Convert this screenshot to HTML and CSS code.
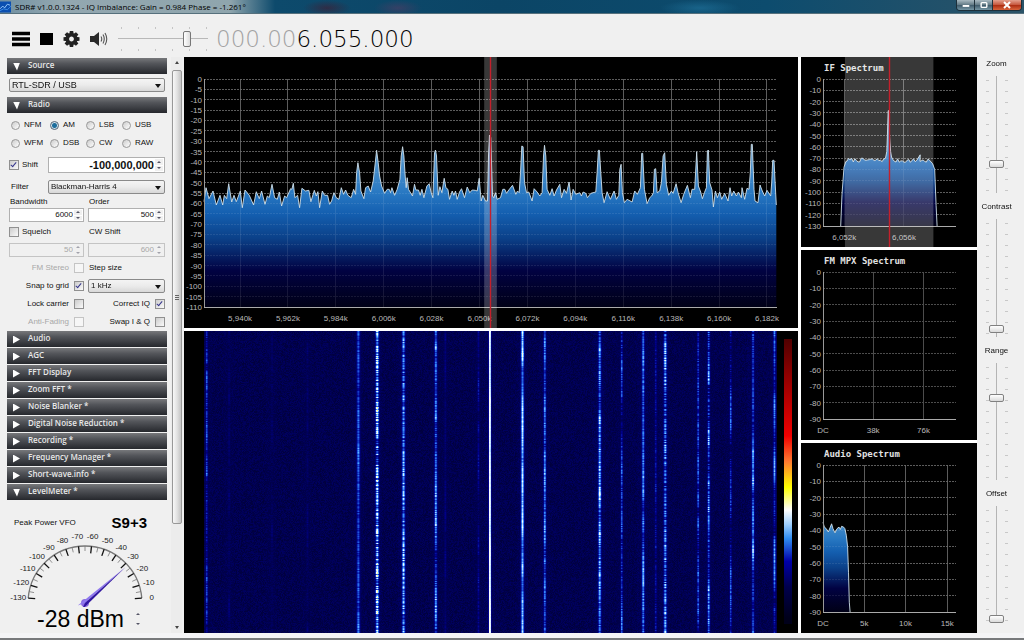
FILE: index.html
```html
<!DOCTYPE html>
<html lang="en">
<head>
<meta charset="utf-8">
<title>SDR# v1.0.0.1324</title>
<link rel="stylesheet" href="styles.css">
</head>
<body>
<header class="titlebar">
  <svg class="app-icon" viewBox="0 0 12 12" aria-hidden="true"><rect width="12" height="12" fill="#0b4fb0"/><path d="M0 8L3 5L5 7L8 3L11 4" stroke="#9fd0ff" fill="none"/><path d="M0 10L4 8L8 9L12 5" stroke="#3f8fe8" fill="none"/></svg>
  <span class="caption">SDR# v1.0.0.1324 - IQ Imbalance: Gain = 0.984 Phase = -1.261°</span>
  <div class="window-buttons">
    <button aria-label="Minimize"><svg viewBox="0 0 18 10"><rect x="6" y="5" width="7" height="2" fill="#fff"/></svg></button>
    <button aria-label="Restore"><svg viewBox="0 0 18 10"><rect x="6.500" y="2.500" width="6" height="5" rx="1" fill="none" stroke="#fff" stroke-width="1.500"/></svg></button>
    <button class="close" aria-label="Close"><svg viewBox="0 0 28 10"><path d="M11 2L17 8M17 2L11 8" stroke="#fff" stroke-width="2"/></svg></button>
  </div>
</header>

<div class="toolbar">
  <button class="tool" aria-label="Menu"><svg width="18" height="16" viewBox="0 0 18 16"><path d="M0 2.500H18M0 8H18M0 13.500H18" stroke="#000" stroke-width="3.400"/></svg></button>
  <button class="tool" aria-label="Stop"><svg width="13" height="16" viewBox="0 0 13 16"><rect y="2" width="13" height="12"/></svg></button>
  <button class="tool" aria-label="Settings"><svg width="17" height="16" viewBox="-8.500 -8 17 16"><g fill="#222"><path id="tooth" d="M-1.700 -8H1.700L2.300 -4H-2.300Z"/><use href="#tooth" transform="rotate(45)"/><use href="#tooth" transform="rotate(90)"/><use href="#tooth" transform="rotate(135)"/><use href="#tooth" transform="rotate(180)"/><use href="#tooth" transform="rotate(225)"/><use href="#tooth" transform="rotate(270)"/><use href="#tooth" transform="rotate(315)"/></g><circle r="4.200" fill="none" stroke="#222" stroke-width="3.600"/></svg></button>
  <button class="tool" aria-label="Mute"><svg width="18" height="16" viewBox="0 0 18 16"><path d="M0 5H4L9 1V15L4 11H0Z" fill="#2a2a2a"/><path d="M11 5.500Q12.500 8 11 10.500M13 3.500Q15.500 8 13 12.500M15 2Q18.500 8 15 14" fill="none" stroke="#555" stroke-width="1.100"/></svg></button>
  <div class="volume"><input type="range" aria-label="Volume" min="0" max="100" value="79"></div>
  <output class="frequency"><span class="leading">000.00</span>6.055.000</output>
</div>

<main class="workspace">
  <div class="side">
    <aside class="controls">
      <button class="section open">Source</button>
      <div class="source"><span class="pick"><select aria-label="Source"><option>RTL-SDR / USB</option></select></span></div>
      <button class="section open">Radio</button>
      <div class="radio-body">
        <div class="modes">
          <label><input type="radio" name="mode">NFM</label>
          <label><input type="radio" name="mode" checked>AM</label>
          <label><input type="radio" name="mode">LSB</label>
          <label><input type="radio" name="mode">USB</label>
          <label><input type="radio" name="mode">WFM</label>
          <label><input type="radio" name="mode">DSB</label>
          <label><input type="radio" name="mode">CW</label>
          <label><input type="radio" name="mode">RAW</label>
        </div>
        <div class="wide shift">
          <label><input type="checkbox" checked>Shift</label>
          <span class="number big"><input type="text" aria-label="Shift in hertz" value="-100,000,000"><span class="steps"><button aria-label="Up"></button><button aria-label="Down"></button></span></span>
        </div>
        <div class="wide filter">
          <label for="filter">Filter</label>
          <span class="pick"><select id="filter"><option>Blackman-Harris 4</option></select></span>
        </div>
        <div class="pair names"><label for="bw">Bandwidth</label><label for="order">Order</label></div>
        <div class="pair values">
          <span class="number"><input id="bw" type="text" value="6000"><span class="steps"><button aria-label="Up"></button><button aria-label="Down"></button></span></span>
          <span class="number"><input id="order" type="text" value="500"><span class="steps"><button aria-label="Up"></button><button aria-label="Down"></button></span></span>
        </div>
        <div class="pair squelch"><label><input type="checkbox">Squelch</label><label for="cw">CW Shift</label></div>
        <div class="pair values low">
          <span class="number off"><input type="text" aria-label="Squelch level" value="50" disabled><span class="steps"><button aria-label="Up" disabled></button><button aria-label="Down" disabled></button></span></span>
          <span class="number off"><input id="cw" type="text" value="600" disabled><span class="steps"><button aria-label="Up" disabled></button><button aria-label="Down" disabled></button></span></span>
        </div>
        <div class="pair row"><label class="end off">FM Stereo<input type="checkbox" disabled></label><label for="step">Step size</label></div>
        <div class="pair row"><label class="end">Snap to grid<input type="checkbox" checked></label><span class="pick"><select id="step"><option>1 kHz</option></select></span></div>
        <div class="pair row"><label class="end">Lock carrier<input type="checkbox"></label><label class="end">Correct IQ<input type="checkbox" checked></label></div>
        <div class="pair row"><label class="end off">Anti-Fading<input type="checkbox" disabled></label><label class="end">Swap I &amp; Q<input type="checkbox"></label></div>
      </div>
      <div class="sections">
        <button class="section">Audio</button>
        <button class="section">AGC</button>
        <button class="section">FFT Display</button>
        <button class="section">Zoom FFT *</button>
        <button class="section">Noise Blanker *</button>
        <button class="section">Digital Noise Reduction *</button>
        <button class="section">Recording *</button>
        <button class="section">Frequency Manager *</button>
        <button class="section">Short-wave.info *</button>
        <button class="section open">LevelMeter *</button>
      </div>
      <div class="meter">
        <div class="meter-head"><span>Peak Power VFO</span><strong>S9+3</strong></div>
        <svg class="gauge" id="gauge" viewBox="0 0 160 78" role="img" aria-label="Level gauge"></svg>
        <div class="meter-foot"><output>-28 dBm</output><span class="steps"><button aria-label="Up"></button><button aria-label="Down"></button></span></div>
      </div>
    </aside>
    <div class="scrollbar" aria-hidden="true"><i class="arrow up"></i><div class="thumb"><i></i><i></i><i></i></div><i class="arrow down"></i></div>
  </div>

  <div class="views">
    <div class="panel"><svg id="spectrum"></svg></div>
    <div class="panel waterfall"><canvas id="waterfall"></canvas><div class="scale"></div></div>
  </div>

  <div class="aux">
    <div class="panel"><svg id="if"></svg></div>
    <div class="panel"><svg id="mpx"></svg></div>
    <div class="panel"><svg id="audio"></svg></div>
  </div>

  <div class="sliders">
    <label for="zoom">Zoom</label><div class="track"><input id="zoom" type="range" min="0" max="100" value="23"></div>
    <label for="contrast">Contrast</label><div class="track"><input id="contrast" type="range" min="0" max="100" value="3"></div>
    <label for="range">Range</label><div class="track"><input id="range" type="range" min="0" max="100" value="71"></div>
    <label for="offset">Offset</label><div class="track"><input id="offset" type="range" min="0" max="100" value="0"></div>
  </div>
</main>
<footer class="edge"></footer>
<script src="app.js"></script>
</body>
</html>
```

FILE: styles.css
```css
* { box-sizing: border-box; }

body {
  margin: 0;
  height: 100vh;
  display: flex;
  flex-direction: column;
  overflow: hidden;
  background: #f0f0f0;
  color: #111;
  font: 8px/10px "Liberation Sans", Arial, sans-serif;
}

button, input, select { font: inherit; color: inherit; margin: 0; padding: 0; border: 0; background: none; }

.titlebar {
  flex: 0 0 14px;
  display: flex;
  align-items: center;
  gap: 4px;
  border-bottom: 1px solid #56707c;
  background:
    radial-gradient(ellipse 24px 8px at 327px 8px, rgba(70, 25, 45, .6), transparent),
    radial-gradient(ellipse 24px 8px at 398px 8px, rgba(80, 60, 100, .6), transparent),
    radial-gradient(ellipse 40px 8px at 700px 8px, rgba(30, 110, 150, .7), transparent),
    linear-gradient(90deg, #6f8fa1 0, #93a7b0 60px, #8fa5ad 230px, #0d4a6c 275px, #0b4566 500px, #0d4c6e 75%, #2b5368);
}
.app-icon { width: 11px; height: 12px; }
.caption { flex: 1; font: 8px/12px "Open Sans", sans-serif; color: #000; white-space: nowrap; }
.window-buttons { display: flex; align-self: flex-start; margin-right: 2px; border: 1px solid #1c2f3a; border-top: 0; border-radius: 0 0 4px 4px; overflow: hidden; }
.window-buttons button { width: 18px; height: 10px; border-right: 1px solid #20323c; background: linear-gradient(#a9b9c1, #607884 50%, #3d5868 50%, #7696a5); }
.window-buttons .close { width: 28px; border: 0; background: linear-gradient(#e3a08e, #c5543a 50%, #a92a10 50%, #d9643c); }
.window-buttons svg { display: block; width: 100%; height: 100%; }

.toolbar { flex: 0 0 43px; display: flex; align-items: center; padding: 6px 12px 0; }
.tool { display: flex; margin-right: 10px; }
.tool svg { display: block; }
.volume { width: 90px; height: 24px; margin-right: 8px; display: flex; align-items: center; background: repeating-linear-gradient(90deg, #c4c4c4 0 1px, transparent 1px 17px) 3px 0 / 86px 2px no-repeat, repeating-linear-gradient(90deg, #c4c4c4 0 1px, transparent 1px 17px) 3px 100% / 86px 2px no-repeat; }
.volume input { appearance: none; width: 100%; height: 17px; background: linear-gradient(#b8b8b8, #b8b8b8) 0 50% / 100% 1px no-repeat; }
.volume input::-webkit-slider-thumb { appearance: none; width: 8px; height: 16px; border: 1px solid #777; border-radius: 2px; background: linear-gradient(90deg, #fff, #dcdcdc); }
.frequency { font: 200 23px/26px "DejaVu Sans", sans-serif; color: #000; }
.leading { color: #a2a2a2; }

.workspace { flex: 1; min-height: 0; display: grid; grid-template-columns: 184px minmax(0, 1fr) 176px 47px; grid-template-rows: minmax(0, 1fr); }
.side { display: flex; min-height: 0; padding-left: 7px; overflow: hidden; }
.controls { width: 160px; display: flex; flex-direction: column; padding-top: 1px; }

.section {
  flex: none;
  display: flex;
  align-items: center;
  width: 100%;
  height: 16px;
  padding: 0 0 2px 6px;
  text-align: left;
  color: #e8e8e8;
  background: linear-gradient(#77787b, #53555a 35%, #26282d);
  font: 600 8px/12px "Open Sans", sans-serif;
  white-space: nowrap;
}
.section::before { content: ""; width: 15px; height: 8px; margin-top: 3px; background: #fff; clip-path: polygon(0 0, 7px 4px, 0 8px); }
.section.open::before { clip-path: polygon(0 0, 7px 0, 4px 8px); }
.sections { display: flex; flex-direction: column; gap: 1px; }

.source { height: 23px; padding: 4px 2px 0; }
.pick { position: relative; display: block; height: 14px; min-width: 0; }
.pick::after { content: ""; position: absolute; right: 4px; top: 6px; border: 3px solid transparent; border-top: 4px solid #111; border-bottom: 0; pointer-events: none; }
.pick select { appearance: none; display: block; width: 100%; height: 14px; padding: 0 8px 0 2px; border: 1px solid #8a8a8a; border-radius: 2px; background: linear-gradient(#f4f4f4, #ebebeb 50%, #d8d8d8); line-height: 12px; }
.source select { font-size: 9px; }

.radio-body { padding: 3px 2px 0; }
.radio-body label { display: flex; align-items: center; gap: 3px; white-space: nowrap; }
.modes { display: grid; grid-template-columns: 39px 36px 36px 1fr; grid-auto-rows: 18px; padding-left: 2px; }
input[type="radio"] { appearance: none; flex: none; width: 9px; height: 9px; border: 1px solid #999; border-radius: 50%; background: linear-gradient(135deg, #ccc, #fff); }
input[type="radio"]:checked { border-color: #567; background: radial-gradient(circle, #1d6d9c 0 2px, #cfe0ea 3px); }
.modes label { gap: 4px; }
input[type="checkbox"] { appearance: none; flex: none; width: 10px; height: 10px; border: 1px solid #909090; background: linear-gradient(135deg, #ccc, #fafafa); }
input[type="checkbox"]:disabled { border-color: #c4c4c4; background: #f6f6f6; }
input[type="checkbox"]:checked::before { content: ""; display: block; width: 2px; height: 5px; margin-left: 2px; border: solid #35358c; border-width: 0 1px 1px 0; transform: rotate(40deg); }

.wide { display: grid; grid-template-columns: 39px 1fr; align-items: center; }
.shift { height: 26px; }
.filter { height: 18px; }
.filter label { padding-left: 2px; }
.pair { display: grid; grid-template-columns: 75px 77px; column-gap: 4px; align-items: center; }
.pair label[for] { padding-left: 1px; }
.names { height: 11px; }
.values { height: 16px; }
.squelch { height: 18px; }
.low { height: 18px; }
.row { height: 18px; }
.end { justify-content: flex-end; }
.radio-body .end { gap: 5px; }
.off { color: #a8a8a8; }

.number { display: flex; height: 14px; border: 1px solid #b0b0b0; background: #fff; }
.number input { flex: 1; width: 0; min-width: 0; text-align: right; line-height: 12px; }
.number.big { height: 16px; }
.number.big input { font-weight: 700; font-size: 11px; }
.number.off { background: #f0f0f0; border-color: #c4c4c4; }
.steps { flex: none; display: flex; flex-direction: column; justify-content: center; gap: 1px; width: 10px; padding: 1px; }
.steps button { flex: 1; background: #f0f0f0; display: flex; align-items: center; justify-content: center; }
.steps button::before { content: ""; border: 2px solid transparent; border-bottom: 2px solid #556; border-top: 0; }
.steps button:last-child::before { border: 2px solid transparent; border-top: 2px solid #556; border-bottom: 0; }
.steps button:disabled { opacity: .5; }

.meter { padding-top: 13px; }
.meter-head { display: flex; align-items: center; padding: 0 20px 0 7px; justify-content: space-between; height: 20px; }
.meter-head strong { font-size: 15px; line-height: 18px; color: #000; }
.gauge { display: block; width: 160px; height: 78px; margin-top: -4px; font-size: 8px; }
.meter-foot { display: flex; align-items: center; gap: 9px; padding-left: 30px; height: 24px; }
.meter-foot output { font-size: 23px; line-height: 24px; color: #000; }
.meter-foot .steps { height: 20px; }

.scrollbar { width: 11px; margin-left: 4px; display: flex; flex-direction: column; align-items: center; padding: 4px 0; background: #ececec; }
.arrow { flex: none; border: 2px solid transparent; }
.arrow.up { border-bottom: 3px solid #444; border-top: 0; }
.arrow.down { border-top: 3px solid #444; border-bottom: 0; margin-top: auto; }
.thumb { flex: 0 1 454px; width: 10px; margin-top: 6px; display: flex; flex-direction: column; align-items: center; justify-content: center; gap: 1px; border: 1px solid #989898; border-radius: 2px; background: linear-gradient(90deg, #f8f8f8, #e2e2e2 50%, #c4c4c4); }
.thumb i { width: 4px; height: 1px; background: #666; }

.views { display: grid; grid-template-rows: minmax(0, 271fr) minmax(0, 302fr); gap: 3px; background: #fff; border-right: 3px solid #fff; }
.aux { display: grid; grid-template-rows: repeat(3, minmax(0, 1fr)); gap: 3px; background: #fff; }
.panel { min-height: 0; min-width: 0; background: #000; }
.panel svg { display: block; width: 100%; height: 100%; font-size: 8px; }
.panel text { fill: #b9b9b9; }
.panel .title { font: 700 9px "DejaVu Sans Mono", monospace; fill: #e2e2e2; }
.waterfall { display: flex; padding-right: 6px; }
.waterfall canvas { display: block; flex: 1; min-width: 0; width: 0; height: 100%; }
.scale { width: 8px; margin: 8px 0 9px 7px; background: linear-gradient(#500000, #8c0000 12%, #f00000 34%, #ff7a30 43%, #ffff00 52%, #fff 60%, #9fd0ff 65%, #2f8cf0 70%, #0000a8 78%, #00004c 87%, #00001a 98%); }

.sliders { display: grid; grid-template-rows: repeat(4, 14px minmax(0, 1fr)); justify-items: center; padding: 0 8px 3px 0; }
.sliders label { line-height: 13px; }
.track { height: 100%; width: 22px; padding: 5px 0 7px; display: flex; justify-content: center; background: repeating-linear-gradient(#c8c8c8 0 1px, transparent 1px 11px) 0 9px / 3px 111px no-repeat, repeating-linear-gradient(#c8c8c8 0 1px, transparent 1px 11px) 100% 9px / 3px 111px no-repeat; }
.track input { appearance: none; writing-mode: vertical-lr; direction: rtl; width: 15px; height: 100%; background: linear-gradient(#b4b4b4, #b4b4b4) 50% 0 / 1px 100% no-repeat; }
.track input::-webkit-slider-thumb { appearance: none; width: 15px; height: 8px; border: 1px solid #808080; border-radius: 2px; background: linear-gradient(#fff, #dadada); }

.edge { flex: 0 0 7px; border-bottom: 2px solid #77797b; background: #f4f4f6; }
```

FILE: app.js
```js
const NS = "http://www.w3.org/2000/svg";

function add(parent, name, attrs, text) {
  const el = document.createElementNS(NS, name);
  for (const key in attrs) el.setAttribute(key, attrs[key]);
  if (text !== undefined) el.textContent = text;
  parent.appendChild(el);
  return el;
}

// Seeded generator keeps every redraw identical.
function random(seed) {
  let s = seed;
  return () => {
    s = (s * 1664525 + 1013904223) >>> 0;
    return s / 4294967296;
  };
}

// Raw trace samples, converted to a 0..1 position and a level in dB.
const bins = "60,437 66,395 75,428 87,405 97,447 108,418 116,447 121,418 128,428 134,383 143,438 150,418 157,437 169,405 175,455 183,402 196,418 209,447 217,407 226,428 233,405 243,445 250,420 256,425 264,385 272,425 280,430 286,408 293,450 302,420 308,425 320,398 324,400 328,382 333,425 341,418 347,455 354,397 365,405 375,403 381,437 391,403 397,420 402,407 407,455 415,405 422,418 431,418 437,445 443,435 450,410 457,425 465,430 472,395 479,415 485,402 492,418 502,425 509,400 515,415 518,350 522,320 527,350 531,405 540,428 545,395 553,390 560,408 568,375 573,330 578,283 583,320 587,360 593,390 602,412 610,400 616,400 620,410 624,395 632,418 640,400 648,370 652,300 656,272 660,300 664,360 667,395 670,365 674,400 686,420 692,385 696,402 704,402 709,418 714,400 720,425 729,390 736,383 742,410 747,425 752,290 755,282 758,300 763,418 768,392 774,410 781,367 786,395 792,400 797,430 805,405 810,418 815,405 820,430 827,408 833,398 842,425 850,393 858,410 865,402 874,403 880,405 886,367 892,435 897,418 905,435 911,435 914,300 917,237 921,245 926,420 930,425 935,410 940,430 950,425 957,400 963,400 968,412 975,402 986,388 996,415 1001,405 1006,410 1010,350 1014,270 1018,272 1022,380 1028,410 1035,408 1045,435 1051,398 1060,408 1068,420 1075,410 1079,300 1082,268 1086,300 1090,400 1098,418 1105,398 1111,420 1118,402 1128,385 1133,425 1141,400 1148,412 1156,378 1162,432 1168,400 1176,415 1188,410 1193,420 1198,408 1206,412 1211,425 1221,412 1236,408 1240,350 1244,283 1247,283 1251,350 1255,410 1261,440 1270,407 1280,430 1291,405 1298,430 1305,418 1308,340 1312,325 1316,410 1322,440 1330,430 1345,438 1353,405 1361,415 1370,395 1374,292 1377,292 1382,400 1390,443 1398,425 1404,420 1409,410 1412,340 1416,338 1420,410 1428,405 1433,380 1438,300 1443,290 1448,385 1455,418 1463,405 1468,412 1477,383 1483,410 1492,440 1500,415 1511,388 1520,425 1525,400 1533,400 1539,287 1544,390 1551,408 1556,428 1562,410 1568,395 1571,285 1574,282 1578,380 1585,402 1589,453 1595,405 1601,425 1608,408 1614,430 1623,412 1633,435 1639,395 1644,420 1650,405 1658,420 1664,408 1673,425 1675,395 1683,430 1690,397 1696,400 1700,350 1703,265 1706,265 1711,400 1714,435 1723,440 1729,387 1736,405 1743,420 1750,403 1761,420 1764,380 1767,313 1771,313 1775,390 1778,447"
  .split(" ").map(p => p.split(",").map(Number))
  .map(([x, y]) => [(x - 60) / 1720, (69 - y) / 684 * 110]);

function ifTrace() {
  const r = random(7), pts = [[.133, -130], [.143, -102], [.158, -78], [.172, -73]];
  for (let t = .18; t < .46; t += .012) pts.push([t, -73.5 + r() * 3.5]);
  pts.push([.47, -70], [.48, -64], [.484, -50], [.49, -28], [.496, -28], [.5, -50], [.508, -64], [.515, -69]);
  for (let t = .525; t < .81; t += .012) pts.push([t, -74 + r() * 3.5]);
  pts.splice(pts.length - 8, 1, [.731, -67]);
  pts.push([.825, -75], [.84, -80], [.85, -112], [.858, -130]);
  return pts;
}

const audioTrace = [[0, -35], [.01, -38], [.025, -39], [.04, -41], [.055, -38], [.065, -36], [.075, -39], [.09, -41.5], [.105, -39], [.12, -38], [.13, -39.5], [.14, -37.5], [.155, -38], [.165, -39], [.175, -43], [.185, -50], [.192, -66], [.198, -84], [.204, -90]];

const charts = {
  spectrum: { left: 20, right: 21, floor: 110, step: 5, trace: bins, ticks: [["5,940k", .063], ["5,962k", .1465], ["5,984k", .23], ["6,006k", .3138], ["6,028k", .397], ["6,050k", .4808], ["6,072k", .5645], ["6,094k", .648], ["6,116k", .7317], ["6,138k", .8153], ["6,160k", .899], ["6,182k", .9825]], band: [.489, .511], tune: .4985 },
  if: { title: "IF Spectrum", left: 22, right: 21, floor: 130, step: 10, trace: ifTrace(), ticks: [["6,052k", .16], ["6,056k", .609]], band: [.165, .83], tune: .495 },
  mpx: { title: "FM MPX Spectrum", left: 22, right: 21, floor: 90, step: 10, ticks: [["DC", 0], ["38k", .377], ["76k", .756]] },
  audio: { title: "Audio Spectrum", left: 22, right: 21, floor: 90, step: 10, trace: audioTrace, ticks: [["DC", 0], ["5k", .31], ["10k", .62], ["15k", .934]] }
};

function drawChart(id) {
  const c = charts[id], svg = document.getElementById(id);
  const w = svg.clientWidth, h = svg.clientHeight;
  svg.replaceChildren();
  const x0 = c.left, x1 = w - c.right, y0 = 22, y1 = h - 21;
  const px = t => x0 + t * (x1 - x0), py = db => y0 - db / c.floor * (y1 - y0);
  const line = (a, b, x, y, stroke, extra) => add(svg, "line", { x1: a, y1: b, x2: x, y2: y, stroke, "shape-rendering": "crispEdges", ...extra });

  const defs = add(svg, "defs", {});
  const grad = add(defs, "linearGradient", { id: id + "-fill", gradientUnits: "userSpaceOnUse", x1: 0, x2: 0, y1: y0, y2: y1 });
  [[0, "#8fbfe6"], [.38, "#4a8fca"], [.5, "#2878c2"], [.59, "#145fb0"], [.7, "#0b4088"], [.84, "#010242"], [1, "#000016"]]
    .forEach(([offset, color]) => add(grad, "stop", { offset, "stop-color": color }));

  const grid = color => {
    for (let db = 0; db < c.floor; db += c.step) line(x0, py(-db), x1, py(-db), color, { "stroke-dasharray": "2 1" });
    c.ticks.forEach(([, t]) => { if (t) line(px(t), y0, px(t), y1, color); });
  };
  grid("#4c4c4c");
  if (c.trace) {
    const path = c.trace.map(([t, db]) => px(t).toFixed(1) + " " + py(db).toFixed(1)).join("L");
    const end = px(c.trace[c.trace.length - 1][0]);
    add(svg, "path", { d: `M${px(c.trace[0][0])} ${y1}L${path}L${end} ${y1}Z`, fill: `url(#${id}-fill)` });
    grid("rgba(255,255,255,.09)");
    add(svg, "path", { d: "M" + path, fill: "none", stroke: "#cfe0ea", "stroke-width": .9 });
  }
  line(x0, y0, x0, y1, "#999");
  line(x0, y1, x1, y1, "#aaa");
  for (let db = 0; db <= c.floor; db += c.step)
    add(svg, "text", { x: x0 - 2, y: py(-db) + 3, "text-anchor": "end" }, db ? "-" + db : "0");
  c.ticks.forEach(([name, t]) => add(svg, "text", { x: px(t), y: y1 + 14, "text-anchor": "middle" }, name));
  if (c.title) add(svg, "text", { x: x0 + 1, y: 14, class: "title" }, c.title);
  if (c.band) {
    add(svg, "rect", { x: px(c.band[0]), y: 0, width: px(c.band[1]) - px(c.band[0]), height: h, fill: "rgba(255,255,255,.22)" });
    add(svg, "rect", { x: Math.round(px(c.tune)) - 1, y: 0, width: 3, height: h, fill: "rgba(200,30,40,.2)" });
    add(svg, "rect", { x: Math.round(px(c.tune)), y: 0, width: 1, height: h, fill: "#c4202c" });
  }
}

// Signals on the waterfall: position, half width, mean level, slow fading, fast flicker.
const signals = [
  [.004, 1, .24, .08, .05], [.043, 1, .16, .03, .02], [.118, 1, .15, .02, .02], [.18, 1, .15, .02, .02],
  [.269, 1.5, .28, .05, .04], [.302, 1.5, .36, .05, .12], [.348, 1.5, .31, .04, .08], [.4045, 1.3, .28, .09, .06], [.421, 1, .17, .02, .02], [.479, 1, .18, .04, .03],
  [.499, 1, .46, .03, .01], [.556, 1.4, .36, .08, .03], [.595, 1.2, .30, .06, .05], [.691, 1.4, .32, .07, .07], [.7295, 1, .25, .07, .05],
  [.767, 1.3, .30, .06, .05], [.789, 1, .20, .03, .04], [.8055, 1.5, .30, .05, .09], [.863, 1, .25, .07, .06], [.8815, 1.2, .28, .08, .07],
  [.92, 1, .22, .09, .05], [.959, 1.2, .30, .09, .05], [.9965, 1.2, .26, .09, .04]
];

const palette = [[0, 0, 0, 0], [.1, 0, 0, 50], [.2, 0, 0, 140], [.27, 25, 70, 205], [.33, 60, 150, 255], [.38, 190, 225, 255], [.42, 255, 255, 255], [.5, 255, 255, 150], [.6, 255, 255, 0]];

function shade(v) {
  let i = 1;
  while (i < palette.length - 1 && v > palette[i][0]) i++;
  const a = palette[i - 1], b = palette[i];
  const t = Math.max(0, Math.min(1, (v - a[0]) / (b[0] - a[0])));
  return [1, 2, 3].map(k => a[k] + (b[k] - a[k]) * t);
}

function drawWaterfall() {
  const canvas = document.getElementById("waterfall");
  const w = canvas.width = canvas.clientWidth, h = canvas.height = canvas.clientHeight;
  const ctx = canvas.getContext("2d"), img = ctx.createImageData(w, h), r = random(42);
  const x0 = 20, x1 = w - 1, level = new Float32Array(w * h);
  for (let i = 0; i < level.length; i++) level[i] = .112 + r() * .04;
  for (const [pos, half, mean, slow, fast] of signals) {
    const cx = x0 + pos * (x1 - x0);
    let from = r() - .5, to = r() - .5, k = 0, span = 8;
    for (let y = 0; y < h; y++) {
      if (k++ >= span) { from = to; to = r() - .5; k = 0; span = 5 + r() * 22; }
      const v = mean + (from + (to - from) * k / span) * 2 * slow + (r() - .5) * 2 * fast;
      for (let x = Math.floor(cx - 5); x <= cx + 5; x++) {
        if (x < x0 || x >= w) continue;
        const d = Math.abs(x - cx) / half;
        const edge = .125 + (v - .125) * Math.exp(-d * d * .75);
        const halo = mean > .29 ? .012 * r() : 0;
        level[y * w + x] = Math.max(level[y * w + x] + halo, edge);
      }
    }
  }
  for (let y = 0; y < h; y++) for (let x = 0; x < w; x++) {
    const i = (y * w + x) * 4, c = x < x0 ? [0, 0, 0] : shade(level[y * w + x]);
    img.data[i] = c[0]; img.data[i + 1] = c[1]; img.data[i + 2] = c[2]; img.data[i + 3] = 255;
  }
  ctx.putImageData(img, 0, 0);
}

function drawGauge(value) {
  const svg = document.getElementById("gauge"), cx = 78, cy = 74, radius = 57;
  const at = (db, rad) => {
    const a = (5 - db / 130 * 170) * Math.PI / 180;
    return [cx + Math.cos(a) * rad, cy - Math.sin(a) * rad];
  };
  const [lx, ly] = at(-130, radius), [rx, ry] = at(0, radius);
  add(svg, "path", { d: `M${lx} ${ly}A${radius} ${radius} 0 0 1 ${rx} ${ry}`, fill: "none", stroke: "#777", "stroke-width": 1.3 });
  for (let db = 0; db >= -130; db -= 5) {
    const major = db % 10 === 0, a = at(db, radius), b = at(db, radius - (major ? 7 : 5));
    add(svg, "line", { x1: a[0], y1: a[1], x2: b[0], y2: b[1], stroke: major ? "#111" : "#777", "stroke-width": major ? 1.3 : .8 });
    if (major) {
      const p = at(db, 67);
      add(svg, "text", { x: p[0], y: p[1] + 3, "text-anchor": "middle", fill: "#222" }, String(db));
    }
  }
  const tip = at(value, 54), dx = (tip[0] - cx) / 54, dy = (tip[1] - cy) / 54;
  const left = [cx - dx * 7 - dy * 3, cy - dy * 7 + dx * 3], right = [cx - dx * 7 + dy * 3, cy - dy * 7 - dx * 3];
  add(svg, "circle", { cx, cy, r: 4, fill: "#8a6be0" });
  add(svg, "path", { d: `M${tip}L${right}L${cx} ${cy}Z`, fill: "#8f78ee" });
  add(svg, "path", { d: `M${tip}L${left}L${cx} ${cy}Z`, fill: "#3015a0" });
}

function render() {
  Object.keys(charts).forEach(drawChart);
  drawWaterfall();
}

drawGauge(-28);
render();
window.addEventListener("resize", render);
```
